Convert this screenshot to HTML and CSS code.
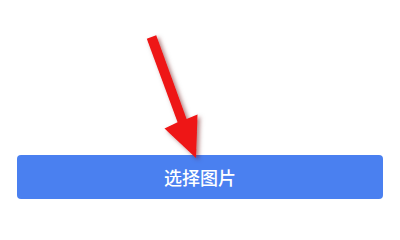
FILE: index.html
```html
<!DOCTYPE html>
<html lang="zh-CN">
<head>
<meta charset="utf-8">
<title>选择图片</title>
<link rel="stylesheet" href="styles.css">
</head>
<body>
<main class="page">
  <div class="spacer"></div>
  <button class="pick-btn" type="button">选择图片</button>
  <svg class="annotation" width="400" height="210" viewBox="0 0 400 210" aria-hidden="true">
    <defs>
      <filter id="shadow" x="-30%" y="-30%" width="160%" height="160%">
        <feDropShadow dx="2.5" dy="2" stdDeviation="2" flood-color="#600000" flood-opacity="0.5"/>
      </filter>
    </defs>
    <polygon filter="url(#shadow)" fill="#ee1414"
      points="146.8,38.8 156.2,35.2 186.6,119 197.5,114.5 196,158 164.5,128.5 177.6,122.2"/>
  </svg>
</main>
</body>
</html>
```

FILE: styles.css
```css
html, body {
  margin: 0;
  padding: 0;
  background: #ffffff;
}

.page {
  position: relative;
  width: 400px;
  height: 210px;
  display: flex;
  flex-direction: column;
  padding: 0 17px;
  box-sizing: border-box;
}

.spacer {
  height: 155px;
  flex: none;
}

.pick-btn {
  flex: none;
  height: 44px;
  border: none;
  border-radius: 4px;
  background: #4a80f0;
  color: #ffffff;
  font-family: "Noto Sans CJK SC", "Noto Sans", sans-serif;
  font-size: 18px;
  font-weight: 500;
  letter-spacing: 0;
  display: flex;
  align-items: center;
  justify-content: center;
  padding: 0 0 1px 0;
}

.annotation {
  position: absolute;
  left: 0;
  top: 0;
  pointer-events: none;
}
```
